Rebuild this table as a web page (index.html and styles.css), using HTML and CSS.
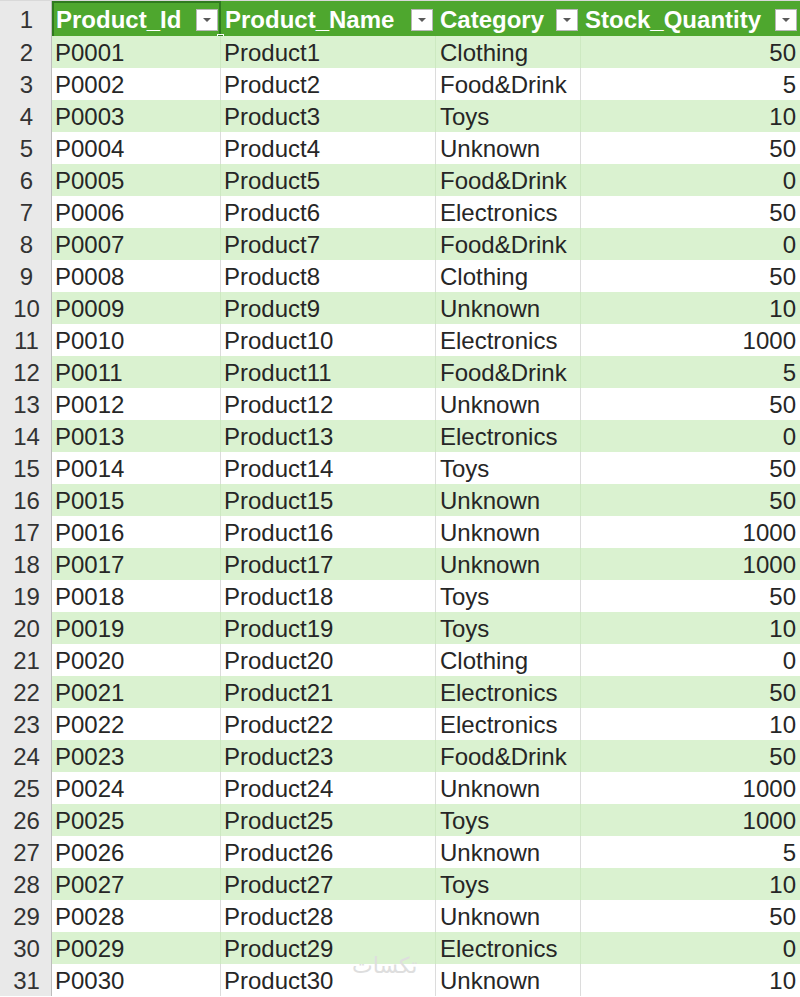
FILE: index.html
```html
<!DOCTYPE html>
<html>
<head>
<meta charset="utf-8">
<link rel="stylesheet" href="styles.css">
</head>
<body>
<div class="sheet">
  <div class="row head">
    <div class="rn">1</div>
    <div class="c hc sel">Product_Id<span class="dd"></span><span class="handle"></span></div>
    <div class="c hc">Product_Name<span class="dd"></span></div>
    <div class="c hc">Category<span class="dd"></span></div>
    <div class="c hc">Stock_Quantity<span class="dd"></span></div>
  </div>
  <div class="row g"><div class="rn">2</div><div class="c a">P0001</div><div class="c b">Product1</div><div class="c cc">Clothing</div><div class="c n">50</div></div>
  <div class="row w"><div class="rn">3</div><div class="c a">P0002</div><div class="c b">Product2</div><div class="c cc">Food&amp;Drink</div><div class="c n">5</div></div>
  <div class="row g"><div class="rn">4</div><div class="c a">P0003</div><div class="c b">Product3</div><div class="c cc">Toys</div><div class="c n">10</div></div>
  <div class="row w"><div class="rn">5</div><div class="c a">P0004</div><div class="c b">Product4</div><div class="c cc">Unknown</div><div class="c n">50</div></div>
  <div class="row g"><div class="rn">6</div><div class="c a">P0005</div><div class="c b">Product5</div><div class="c cc">Food&amp;Drink</div><div class="c n">0</div></div>
  <div class="row w"><div class="rn">7</div><div class="c a">P0006</div><div class="c b">Product6</div><div class="c cc">Electronics</div><div class="c n">50</div></div>
  <div class="row g"><div class="rn">8</div><div class="c a">P0007</div><div class="c b">Product7</div><div class="c cc">Food&amp;Drink</div><div class="c n">0</div></div>
  <div class="row w"><div class="rn">9</div><div class="c a">P0008</div><div class="c b">Product8</div><div class="c cc">Clothing</div><div class="c n">50</div></div>
  <div class="row g"><div class="rn">10</div><div class="c a">P0009</div><div class="c b">Product9</div><div class="c cc">Unknown</div><div class="c n">10</div></div>
  <div class="row w"><div class="rn">11</div><div class="c a">P0010</div><div class="c b">Product10</div><div class="c cc">Electronics</div><div class="c n">1000</div></div>
  <div class="row g"><div class="rn">12</div><div class="c a">P0011</div><div class="c b">Product11</div><div class="c cc">Food&amp;Drink</div><div class="c n">5</div></div>
  <div class="row w"><div class="rn">13</div><div class="c a">P0012</div><div class="c b">Product12</div><div class="c cc">Unknown</div><div class="c n">50</div></div>
  <div class="row g"><div class="rn">14</div><div class="c a">P0013</div><div class="c b">Product13</div><div class="c cc">Electronics</div><div class="c n">0</div></div>
  <div class="row w"><div class="rn">15</div><div class="c a">P0014</div><div class="c b">Product14</div><div class="c cc">Toys</div><div class="c n">50</div></div>
  <div class="row g"><div class="rn">16</div><div class="c a">P0015</div><div class="c b">Product15</div><div class="c cc">Unknown</div><div class="c n">50</div></div>
  <div class="row w"><div class="rn">17</div><div class="c a">P0016</div><div class="c b">Product16</div><div class="c cc">Unknown</div><div class="c n">1000</div></div>
  <div class="row g"><div class="rn">18</div><div class="c a">P0017</div><div class="c b">Product17</div><div class="c cc">Unknown</div><div class="c n">1000</div></div>
  <div class="row w"><div class="rn">19</div><div class="c a">P0018</div><div class="c b">Product18</div><div class="c cc">Toys</div><div class="c n">50</div></div>
  <div class="row g"><div class="rn">20</div><div class="c a">P0019</div><div class="c b">Product19</div><div class="c cc">Toys</div><div class="c n">10</div></div>
  <div class="row w"><div class="rn">21</div><div class="c a">P0020</div><div class="c b">Product20</div><div class="c cc">Clothing</div><div class="c n">0</div></div>
  <div class="row g"><div class="rn">22</div><div class="c a">P0021</div><div class="c b">Product21</div><div class="c cc">Electronics</div><div class="c n">50</div></div>
  <div class="row w"><div class="rn">23</div><div class="c a">P0022</div><div class="c b">Product22</div><div class="c cc">Electronics</div><div class="c n">10</div></div>
  <div class="row g"><div class="rn">24</div><div class="c a">P0023</div><div class="c b">Product23</div><div class="c cc">Food&amp;Drink</div><div class="c n">50</div></div>
  <div class="row w"><div class="rn">25</div><div class="c a">P0024</div><div class="c b">Product24</div><div class="c cc">Unknown</div><div class="c n">1000</div></div>
  <div class="row g"><div class="rn">26</div><div class="c a">P0025</div><div class="c b">Product25</div><div class="c cc">Toys</div><div class="c n">1000</div></div>
  <div class="row w"><div class="rn">27</div><div class="c a">P0026</div><div class="c b">Product26</div><div class="c cc">Unknown</div><div class="c n">5</div></div>
  <div class="row g"><div class="rn">28</div><div class="c a">P0027</div><div class="c b">Product27</div><div class="c cc">Toys</div><div class="c n">10</div></div>
  <div class="row w"><div class="rn">29</div><div class="c a">P0028</div><div class="c b">Product28</div><div class="c cc">Unknown</div><div class="c n">50</div></div>
  <div class="row g"><div class="rn">30</div><div class="c a">P0029</div><div class="c b">Product29</div><div class="c cc">Electronics</div><div class="c n">0</div></div>
  <div class="row w"><div class="rn">31</div><div class="c a">P0030</div><div class="c b">Product30</div><div class="c cc">Unknown<span class="wm">تكسات</span></div><div class="c n">10</div></div>
</div>
</body>
</html>
```
FILE: styles.css
```css
html, body {
  margin: 0;
  padding: 0;
  background: #ffffff;
}
.sheet {
  width: 800px;
  font-family: "Liberation Sans", Arial, sans-serif;
  font-size: 24px;
  color: #262626;
}
.row {
  display: grid;
  grid-template-columns: 52px 169px 215px 145px 219px;
  height: 32px;
  line-height: 31px;
}
.row.head {
  height: 36px;
  line-height: 36px;
  background: #4ea72e;
  border-top: 1px solid #d9d9d9;
  box-sizing: border-box;
}
.rn {
  background: #e9e9e9;
  color: #333333;
  text-align: center;
  border-right: 1px solid #bdbdbd;
  border-bottom: 1px solid #d2d2d2;
  box-sizing: border-box;
  padding-left: 2px;
  padding-top: 1px;
}
.head .rn {
  line-height: 34px;
  padding-top: 2px;
}
.c {
  position: relative;
  white-space: nowrap;
  overflow: visible;
  box-sizing: border-box;
  padding-left: 3px;
  padding-top: 1px;
  border-bottom: 1px solid #c9e7bc;
}
.row.w .c {
  border-right: 1px solid #dcdcdc;
  background: #ffffff;
}
.row.g .c {
  border-right: 1px solid #cde9c1;
  background: #daf2d0;
}
.row.w .c.n, .row.g .c.n { border-right: none; }
.c.cc { padding-left: 4px; }
.c.b { padding-left: 3px; }
.c.n {
  text-align: right;
  padding-right: 4px;
}
.hc {
  color: #ffffff;
  font-weight: bold;
  border-bottom: none;
  padding-left: 4px;
  padding-top: 2px;
  line-height: 34px;
}
.hc.sel {
  outline: 2px solid #2f7a1f;
  outline-offset: -2px;
}
.dd {
  position: absolute;
  right: 3px;
  top: 8px;
  width: 22px;
  height: 22px;
  background: #ffffff;
  border: 1px solid #b8b8b8;
  box-sizing: border-box;
}
.dd::after {
  content: "";
  position: absolute;
  left: 6px;
  top: 8px;
  border-left: 4px solid transparent;
  border-right: 4px solid transparent;
  border-top: 4px solid #5a5a5a;
}
.handle {
  position: absolute;
  right: -3px;
  bottom: -3px;
  width: 5px;
  height: 5px;
  background: #2f7a1f;
  border: 1px solid #ffffff;
}
.wm {
  position: absolute;
  left: -84px;
  top: -12px;
  line-height: 24px;
  font-family: "Noto Sans", "DejaVu Sans", sans-serif;
  font-size: 22px;
  color: #dedede;
  z-index: 2;
}
```
